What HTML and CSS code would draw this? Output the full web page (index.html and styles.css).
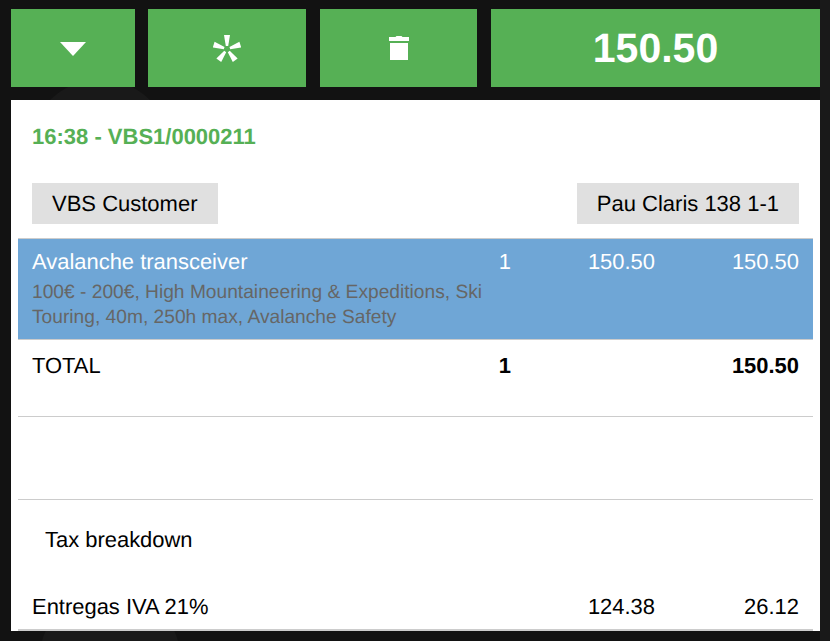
FILE: index.html
```html
<!DOCTYPE html>
<html lang="en">
<head>
    <meta charset="UTF-8">
    <meta name="viewport" content="width=device-width, initial-scale=1.0">
    <title>Order ticket</title>
    <link rel="stylesheet" href="styles.css">
</head>
<body>
    <div class="toolbar">
        <button class="tool tool-down" type="button">
            <svg width="26" height="14" viewBox="0 0 26 14"><path d="M0 0H26L13 14Z" fill="#fff"/></svg>
        </button>
        <button class="tool tool-star" type="button">
            <svg width="28" height="28" viewBox="0 0 28 28">
                <path d="M11 0H17L15.2 11H12.8Z" fill="#fff"/>
                <path d="M11 0H17L15.2 11H12.8Z" fill="#fff" transform="rotate(72 14 14)"/>
                <path d="M11 0H17L15.2 11H12.8Z" fill="#fff" transform="rotate(144 14 14)"/>
                <path d="M11 0H17L15.2 11H12.8Z" fill="#fff" transform="rotate(216 14 14)"/>
                <path d="M11 0H17L15.2 11H12.8Z" fill="#fff" transform="rotate(288 14 14)"/>
            </svg>
        </button>
        <button class="tool tool-trash" type="button">
            <svg width="20" height="24" viewBox="0 0 20 24"><path d="M0 1H6.5L7.5 0H12.5L13.5 1H20V5H0ZM1 7H19V24H1Z" fill="#fff"/></svg>
        </button>
        <div class="tool tool-total">150.50</div>
    </div>

    <div class="ticket">
        <div class="ticket-title">16:38 - VBS1/0000211</div>
        <div class="ticket-tags">
            <span class="tag">VBS Customer</span>
            <span class="tag">Pau Claris 138 1-1</span>
        </div>

        <div class="row row-line">
            <div class="cell-name">
                Avalanche transceiver
                <div class="line-tags">100€ - 200€, High Mountaineering &amp; Expeditions, Ski Touring, 40m, 250h max, Avalanche Safety</div>
            </div>
            <div class="cell-qty">1</div>
            <div class="cell-num">150.50</div>
            <div class="cell-num">150.50</div>
        </div>

        <div class="row row-total">
            <div class="cell-name">TOTAL</div>
            <div class="cell-qty"><b>1</b></div>
            <div class="cell-num"></div>
            <div class="cell-num"><b>150.50</b></div>
        </div>

        <div class="row-empty"></div>

        <div class="tax-title">Tax breakdown</div>

        <div class="row row-tax">
            <div class="cell-name">Entregas IVA 21%</div>
            <div class="cell-qty"></div>
            <div class="cell-num">124.38</div>
            <div class="cell-num">26.12</div>
        </div>
    </div>
</body>
</html>
```

FILE: styles.css
```css
html, body {
    height: 100%;
}

body {
    margin: 0;
    overflow: hidden;
    font-family: "Liberation Sans", Arial, sans-serif;
    font-size: 21.95px;
    text-rendering: geometricPrecision;
    color: #000;
    background-color: #121212;
    background-image:
        linear-gradient(90deg, transparent 820px, #191919 820px),
        radial-gradient(circle at 110px 660px, #191919 70px, transparent 71px),
        radial-gradient(circle at 100px 150px, #191919 70px, transparent 71px);
}

.toolbar {
    display: flex;
    height: 78px;
    padding: 9px 10px 13px 11px;
}

.tool {
    display: flex;
    align-items: center;
    justify-content: center;
    padding: 0;
    border: none;
    background-color: #56b055;
}

.tool-down {
    width: 124px;
    margin-right: 13px;
    padding-top: 2px;
}

.tool-star {
    width: 158px;
    margin-right: 14px;
    padding-top: 2px;
}

.tool-trash {
    width: 157px;
    margin-right: 14px;
}

.tool-total {
    flex: 1;
    color: #fff;
    font-size: 41px;
    font-weight: bold;
}

.ticket {
    height: 531px;
    margin: 0 10px 0 11px;
    padding: 0 7px;
    box-sizing: border-box;
    background-color: #fff;
}

.ticket-title {
    height: 59px;
    box-sizing: border-box;
    padding: 24px 14px 0;
    color: #56b055;
    font-size: 22px;
    font-weight: bold;
    line-height: 26px;
}

.ticket-tags {
    display: flex;
    justify-content: space-between;
    padding: 24px 14px 14px;
    font-size: 22px;
}

.tag {
    padding: 0 20px;
    background-color: #e0e0e0;
    line-height: 41px;
}

.row {
    display: flex;
    padding: 0 14px;
    line-height: 25px;
}

.row-line {
    height: 90px;
    padding-top: 10px;
    color: #fff;
    background-color: #6fa6d6;
    border-top: 1px solid #ccc;
    border-bottom: 1px solid #ccc;
}

.row-total {
    height: 77px;
    box-sizing: border-box;
    padding-top: 13px;
    border-bottom: 1px solid #ccc;
}

.row-empty {
    height: 82px;
    border-bottom: 1px solid #ccc;
}

.tax-title {
    height: 83px;
    box-sizing: border-box;
    padding: 27px 27px 0;
    line-height: 26px;
}

.row-tax {
    height: 35px;
    padding-top: 11px;
    border-bottom: 2px solid #ccc;
}

.cell-name {
    width: 453px;
}

.cell-qty {
    width: 26px;
    text-align: right;
}

.cell-num {
    width: 144px;
    text-align: right;
}

.line-tags {
    margin-top: 6px;
    color: #666;
    font-size: 19.2px;
    line-height: 25px;
}
```
